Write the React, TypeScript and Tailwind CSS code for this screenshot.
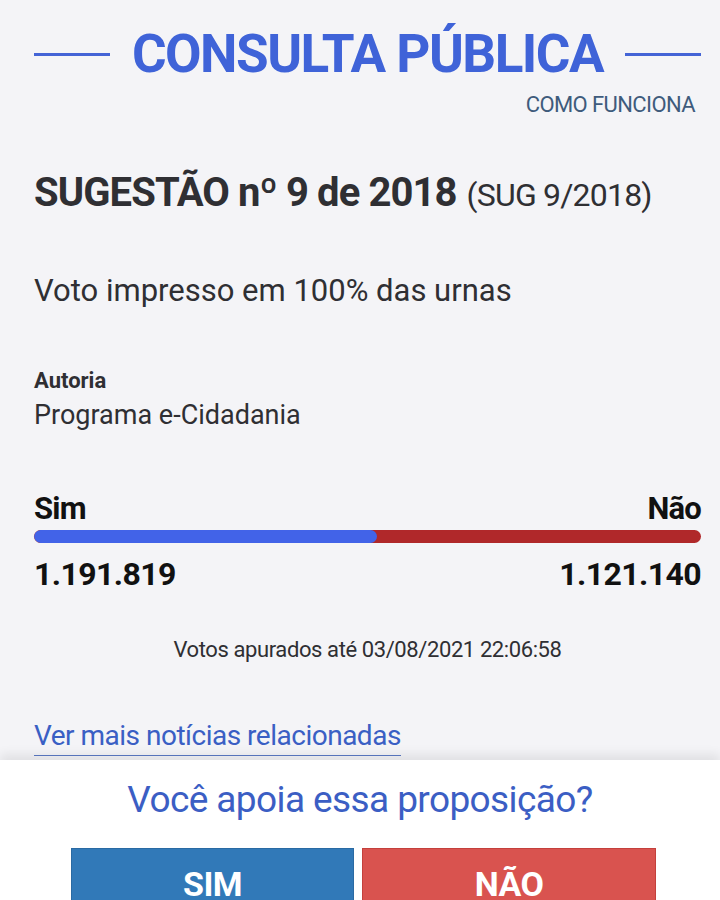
export default function App() {
  return (
    <div className="relative h-[900px] w-[720px] overflow-hidden bg-[#f4f4f7] font-['Roboto',sans-serif] text-[#333]">
      <div className="pl-[34px] pr-[19px] pt-[22px]">
        <div className="flex items-center gap-[22px]">
          <div className="h-[3px] flex-1 bg-[#4464d6]" />
          <h1 className="text-[53px] leading-[64px] font-bold tracking-[-1.5px] text-[#3f63d8]">
            CONSULTA PÚBLICA
          </h1>
          <div className="h-[3px] flex-1 bg-[#4464d6]" />
        </div>
        <div className="mt-[7px] pr-[6px] text-right text-[22px] leading-[24px] tracking-[-0.6px] text-[#3e5b7c]">
          COMO FUNCIONA
        </div>

        <h2 className="mt-[54px] text-[40px] leading-[44px] text-[#2f2f33]">
          <span className="font-bold tracking-[-0.9px]">SUGESTÃO nº 9 de 2018</span>{" "}
          <span className="text-[32px] tracking-[-0.8px]">(SUG 9/2018)</span>
        </h2>

        <p className="mt-[56px] text-[31px] leading-[36px] text-[#2f2f33]">
          Voto impresso em 100% das urnas
        </p>

        <div className="mt-[59px]">
          <div className="text-[22px] leading-[26px] font-bold text-[#2f2f33]">Autoria</div>
          <div className="mt-[5px] text-[27px] leading-[32px] text-[#2f2f33]">Programa e-Cidadania</div>
        </div>

        <div className="mt-[61px]">
          <div className="flex justify-between text-[31px] leading-[34px] font-bold tracking-[-0.8px] text-[#111]">
            <span>Sim</span>
            <span>Não</span>
          </div>
          <div className="mt-[4px] flex h-[13px] overflow-hidden rounded-full bg-[#b0282a]">
            <div className="h-full w-[343px] rounded-full bg-[#4263e8]" />
          </div>
          <div className="mt-[12px] flex justify-between text-[32px] leading-[38px] font-bold tracking-[-0.6px] text-[#111]">
            <span>1.191.819</span>
            <span>1.121.140</span>
          </div>
        </div>

        <p className="mt-[44px] text-center text-[22px] leading-[26px] tracking-[-0.4px] text-[#2f2f33]">
          Votos apurados até 03/08/2021 22:06:58
        </p>

        <a className="mt-[56px] inline-block border-b border-[#5b79c4] pb-[2px] text-[28px] leading-[34px] tracking-[-0.5px] text-[#3a5fc4]">
          Ver mais notícias relacionadas
        </a>
      </div>

      <div className="absolute bottom-0 left-0 right-0 top-[760px] bg-white shadow-[0_-6px_10px_rgba(0,0,0,0.08)]">
        <p className="mt-[18px] text-center text-[37px] leading-[44px] tracking-[-0.6px] text-[#3b5ec4]">
          Você apoia essa proposição?
        </p>
        <div className="mt-[26px] flex justify-center gap-[8px] pl-[7px]">
          <button className="h-[70px] w-[283px] border border-[#2a6aa3] bg-[#3179b8] pt-[2px] text-[34px] font-bold tracking-[-0.6px] text-white">
            SIM
          </button>
          <button className="h-[70px] w-[294px] border border-[#c4403c] bg-[#d9534f] pt-[2px] text-[34px] font-bold tracking-[-0.6px] text-white">
            NÃO
          </button>
        </div>
      </div>
    </div>
  );
}
